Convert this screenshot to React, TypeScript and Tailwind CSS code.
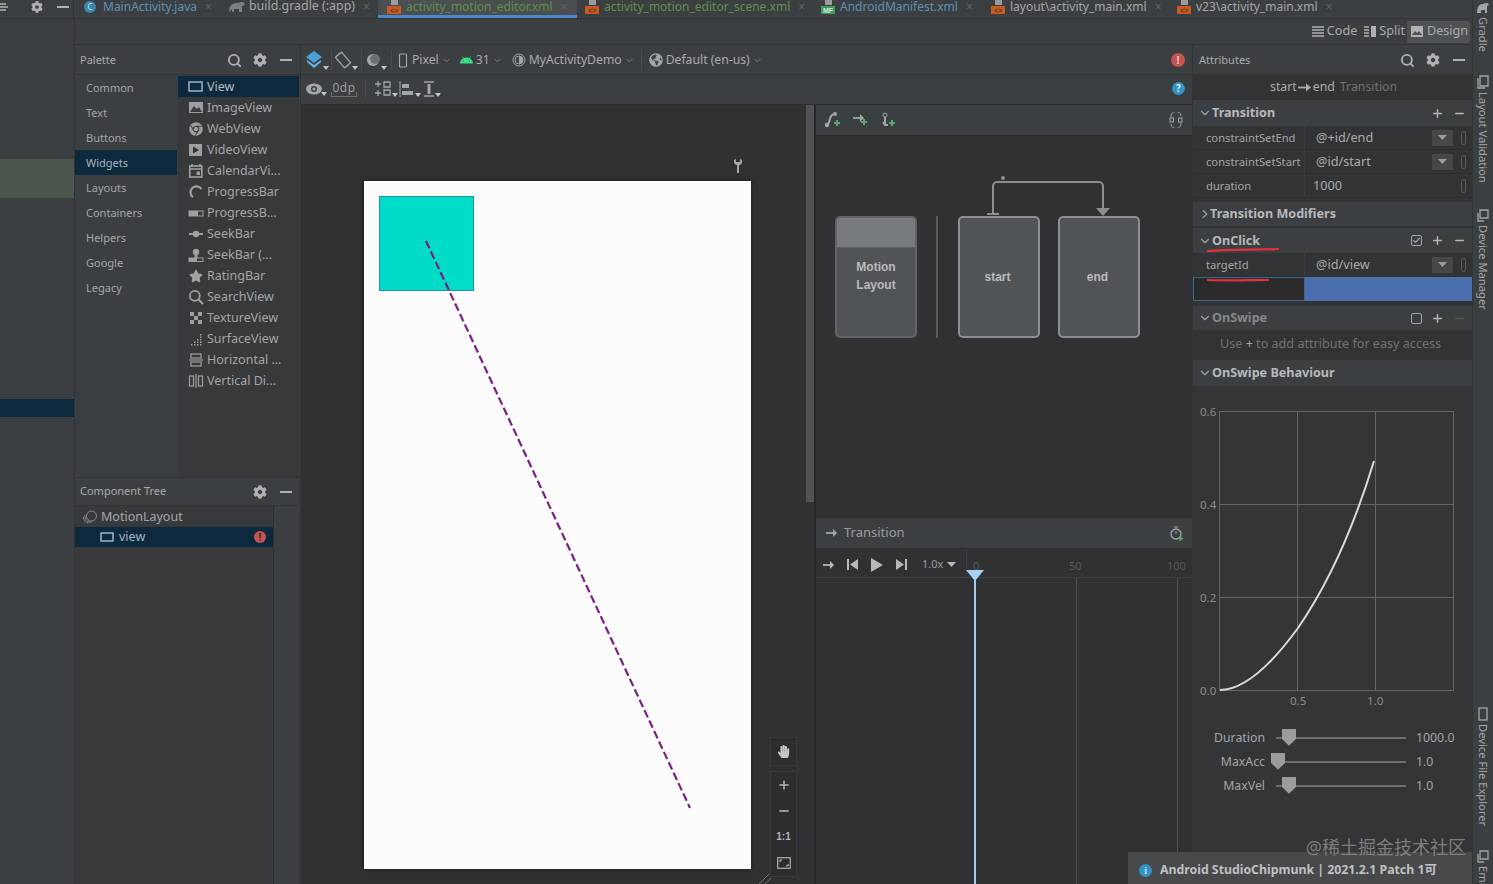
import { Search, Minus, Plus, Check, ChevronDown, ChevronRight } from 'lucide-react';
import { FaCog, FaChrome, FaStar, FaHandPaper, FaAndroid, FaGlobeAmericas } from 'react-icons/fa';

const Gear = () => <FaCog size={14} className="text-[#afb1b3]" />;
const Dash = () => <div className="w-[12px] h-[2px] bg-[#afb1b3]" />;

const FileIcon = ({ kind }: { kind: 'xml' | 'mf' }) => (
  <svg width="16" height="14" viewBox="0 0 16 14" className="mr-[4px] shrink-0">
    <rect x="5" y="0" width="7" height="5" fill="#9a9c9e" />
    <rect x="1" y="6" width="14" height="8" fill={kind === 'xml' ? '#c9591f' : '#3f9a5c'} />
    <text x="8" y="12.5" fontSize="7" textAnchor="middle" fill={kind === 'xml' ? '#3c3f41' : '#d8e8dc'} fontFamily="Liberation Sans" fontWeight="700">
      {kind === 'xml' ? '<>' : 'MF'}
    </text>
  </svg>
);

const Tab = ({ w, label, color, icon, active, pl }: { w: string; label: string; color: string; icon: React.ReactNode; active?: boolean; pl: string }) => (
  <div className={`${w} ${pl} h-[18px] flex items-center shrink-0 whitespace-nowrap text-[12px] ${active ? 'bg-[#4a4e50] border-b-[3px] border-[#4a88c7] pb-[2px]' : 'pb-[5px]'}`}>
    {icon}
    <span className={color}>{label}</span>
    <span className="ml-[8px] text-[#5f6264] text-[12px]">×</span>
  </div>
);

const Caret = ({ className = '' }: { className?: string }) => (
  <svg width="6" height="4" viewBox="0 0 6 4" className={`self-end ${className}`}><path d="M0 0h6L3 4z" fill="#c4c6c8" /></svg>
);

const Chev = ({ className = '' }: { className?: string }) => <ChevronDown size={11} className={`text-[#7f8183] ${className}`} />;

const categories = ['Common', 'Text', 'Buttons', 'Widgets', 'Layouts', 'Containers', 'Helpers', 'Google', 'Legacy'];

const c = '#9da0a2';
const widgets: { name: string; icon: React.ReactNode }[] = [
  { name: 'View', icon: <rect x="1" y="3" width="13" height="9" fill="none" stroke="#9fb4c6" strokeWidth="1.5" /> },
  { name: 'ImageView', icon: <><rect x="1" y="2" width="14" height="11" fill={c} /><path d="M2 12l4-6 3 3 2-2 3 5z" fill="#3a3c3e" /></> },
  { name: 'WebView', icon: null },
  { name: 'VideoView', icon: <><rect x="1" y="2" width="13" height="12" fill={c} /><path d="M5 4.5l6 3.5-6 3.5z" fill="#333537" /></> },
  { name: 'CalendarVi...', icon: <><rect x="1.8" y="3" width="12" height="11" fill="none" stroke={c} strokeWidth="1.6" /><path d="M4 1v3M12 1v3M2 6h12" stroke={c} strokeWidth="1.6" /><rect x="8.5" y="8.5" width="3.5" height="3.5" fill={c} /></> },
  { name: 'ProgressBar', icon: <path d="M13.5 5A6 6 0 1 0 5 13.2" fill="none" stroke={c} strokeWidth="2.2" /> },
  { name: 'ProgressB...', icon: <><rect x="1" y="6" width="14" height="5" fill="none" stroke={c} strokeWidth="1" /><rect x="1" y="6" width="9" height="5" fill={c} /></> },
  { name: 'SeekBar', icon: <><rect x="1" y="7" width="14" height="2" fill={c} /><circle cx="8" cy="8" r="3.2" fill={c} /></> },
  { name: 'SeekBar (...', icon: <><circle cx="8" cy="5" r="3.2" fill={c} /><path d="M6.5 8h3v3h-3z" fill={c} /><rect x="1" y="11" width="14" height="3.5" fill="none" stroke={c} /><rect x="1" y="11" width="8" height="3.5" fill={c} /></> },
  { name: 'RatingBar', icon: null },
  { name: 'SearchView', icon: <><circle cx="6.8" cy="6.8" r="5" fill="none" stroke={c} strokeWidth="1.8" /><path d="M10.5 10.5L15 15" stroke={c} strokeWidth="2" /></> },
  { name: 'TextureView', icon: <path d="M2 2h4v4H2zM10 2h4v4h-4zM6 6h4v4H6zM2 10h4v4H2zM10 10h4v4h-4z" fill={c} /> },
  { name: 'SurfaceView', icon: <path d="M3 13h1.4v1.4H3zM6 13h1.4v1.4H6zM9 13h1.4v1.4H9zM12 13h1.4v1.4H12zM6 10.5h1.4v1.4H6zM9 10.5h1.4v1.4H9zM12 10.5h1.4v1.4H12zM9 8h1.4v1.4H9zM12 8h1.4v1.4H12zM12 5.5h1.4v1.4H12zM12 3h1.4v1.4H12z" fill={c} /> },
  { name: 'Horizontal ...', icon: <><rect x="3" y="2" width="10" height="4" fill="none" stroke={c} strokeWidth="1.2" /><path d="M1 8h14" stroke={c} strokeWidth="1.2" /><rect x="3" y="10" width="10" height="4" fill="none" stroke={c} strokeWidth="1.2" /></> },
  { name: 'Vertical Di...', icon: <><rect x="1.5" y="3" width="4" height="10" fill="none" stroke={c} strokeWidth="1.2" /><path d="M8 1v14" stroke={c} strokeWidth="1.2" /><rect x="10.5" y="3" width="4" height="10" fill="none" stroke={c} strokeWidth="1.2" /></> },
];

const WidgetIcon = ({ w }: { w: (typeof widgets)[number] }) => {
  if (w.name === 'WebView') return <FaChrome size={14} className="text-[#9da0a2] mr-[4px] ml-[1px] shrink-0" />;
  if (w.name === 'RatingBar') return <FaStar size={14} className="text-[#9da0a2] mr-[4px] ml-[1px] shrink-0" />;
  return <svg width="16" height="16" viewBox="0 0 16 16" className="mr-[3px] shrink-0">{w.icon}</svg>;
};

const Section = ({ title, open = true, dim, right, py = 'h-[24px]' }: { title: string; open?: boolean; dim?: boolean; right?: React.ReactNode; py?: string }) => (
  <div className={`${py} bg-[#3c3f41] flex items-center pl-[5px] pr-[6px] shrink-0`}>
    {open ? <ChevronDown size={14} className="text-[#a0a2a4]" /> : <ChevronRight size={14} className="text-[#a0a2a4] mr-[-2px]" />}
    <span className={`text-[12.6px] font-bold pt-[1px] ${dim ? 'text-[#85888a]' : 'text-[#b7b9bb]'}`}>{title}</span>
    <div className="ml-auto flex items-center gap-[9px]">{right}</div>
  </div>
);

const PropRow = ({ label, value, dropdown = true, vx = 'pl-[11px]' }: { label: string; value: string; dropdown?: boolean; vx?: string }) => (
  <div className="h-[24px] flex items-center bg-[#313335] border-b border-[#2b2d2f] text-[#a3a6a8] shrink-0">
    <div className="w-[112px] pl-[13px] pt-[1px] whitespace-nowrap border-r border-[#3c3f41] h-full flex items-center text-[11.2px]">{label}</div>
    <div className={`${vx} pt-[1px] flex-1 text-[12.7px] text-[#a9abad]`}>{value}</div>
    {dropdown && (
      <div className="w-[21px] h-[16px] bg-[#45484a] flex items-center justify-center"><svg width="9" height="5" viewBox="0 0 9 5"><path d="M0 0h9L4.5 5z" fill="#9a9c9e" /></svg></div>
    )}
    <div className="ml-[8px] mr-[6px] w-[5px] h-[14px] rounded-[3px] border border-[#5a5c5e]" />
  </div>
);

const Slider = ({ label, value, thumb }: { label: string; value: string; thumb: string }) => (
  <div className="h-[24px] flex items-center text-[12.3px] text-[#a3a6a8]">
    <div className="w-[72px] text-right">{label}</div>
    <div className="relative ml-[11px] w-[130px] h-[2.5px] bg-[#6b6d6f]">
      <div className={`absolute top-[-8px] ${thumb} w-[14px] h-[17px] bg-[#9a9c9e] [clip-path:polygon(0_0,100%_0,100%_60%,50%_100%,0_60%)]`} />
    </div>
    <div className="ml-[10px]">{value}</div>
  </div>
);

const Side = ({ label, icon, mt }: { label: string; icon: React.ReactNode; mt: string }) => (
  <div className={`${mt} flex flex-col items-center shrink-0`}>
    {icon}
    <span className="[writing-mode:vertical-rl] text-[11.2px] text-[#a3a6a8] mt-[3px] whitespace-nowrap">{label}</span>
  </div>
);

const DeviceIcon = () => (
  <svg width="12" height="13" viewBox="0 0 12 13"><path d="M3 1h8v8H3zM1 4v8h6" fill="none" stroke="#a3a6a8" strokeWidth="1.3" /></svg>
);

export default function App() {
  return (
    <div className="relative w-[1493px] h-[884px] overflow-hidden flex bg-[#3c3f41] text-[#a9abad] font-['Noto_Sans',sans-serif]">
      <div className="w-[1472px] flex flex-col shrink-0">
        {/* tab bar */}
        <div className="h-[19px] flex border-b border-[#323436] shrink-0 overflow-hidden">
          <div className="w-[74px] h-[18px] flex items-center pb-[5px] shrink-0 border-r border-[#323436]">
            <svg width="8" height="10" viewBox="0 0 8 10" className="mr-[23px]"><path d="M0 2h6M0 5h8M0 8h6" stroke="#afb1b3" strokeWidth="1.4" /></svg>
            <FaCog size={12} className="text-[#afb1b3] mr-[14px]" />
            <div className="w-[12px] h-[2px] bg-[#afb1b3]" />
          </div>
          <Tab w="w-[146px]" pl="pl-[10px]" label="MainActivity.java" color="text-[#5d8fb5]" icon={<span className="w-[12px] h-[12px] mr-[7px] rounded-full bg-[#3c86ab] text-[8px] leading-[12px] text-center text-[#cfe3ee]">C</span>} />
          <Tab w="w-[158px]" pl="pl-[8px]" label="build.gradle (:app)" color="text-[#a3a6a8] text-[12.4px]" icon={<svg width="18" height="12" viewBox="0 0 18 12" className="mr-[3px]"><path d="M1 11c0-6 3-9 8-9 2 0 3-1 5-1 2 0 3 2 3 3l-3 1v6h-3V8H6v3H4V8z" fill="#7c7f81" /></svg>} />
          <Tab active w="w-[199px]" pl="pl-[8px]" label="activity_motion_editor.xml" color="text-[#5f8f4a]" icon={<FileIcon kind="xml" />} />
          <Tab w="w-[235px]" pl="pl-[7px]" label="activity_motion_editor_scene.xml" color="text-[#5f8f4a]" icon={<FileIcon kind="xml" />} />
          <Tab w="w-[170px]" pl="pl-[8px]" label="AndroidManifest.xml" color="text-[#5d8fb5]" icon={<FileIcon kind="mf" />} />
          <Tab w="w-[186px]" pl="pl-[8px]" label="layout\activity_main.xml" color="text-[#a3a6a8]" icon={<FileIcon kind="xml" />} />
          <Tab w="w-[176px]" pl="pl-[8px]" label="v23\activity_main.xml" color="text-[#a3a6a8]" icon={<FileIcon kind="xml" />} />
        </div>

        <div className="flex-1 flex min-h-0">
          {/* project panel remains */}
          <div className="w-[75px] shrink-0 flex flex-col border-r border-[#323436] pt-[140px]">
            <div className="h-[39px] bg-[#4a564b]" />
            <div className="h-[201px]" />
            <div className="h-[18px] bg-[#0d293e]" />
          </div>

          <div className="flex-1 flex flex-col min-w-0">
            {/* code split design */}
            <div className="h-[26px] flex items-center justify-end pr-[2px] border-b border-[#323436] text-[12.6px] text-[#a9abad] shrink-0">
              <svg width="12" height="11" viewBox="0 0 12 11" className="mr-[3px]"><path d="M0 1h12M0 4h12M0 7h12M0 10h12" stroke="#afb1b3" strokeWidth="1.4" /></svg>
              <span>Code</span>
              <svg width="12" height="11" viewBox="0 0 12 11" className="ml-[7px] mr-[3px]"><path d="M0 1h5M0 4h5M0 7h5M0 10h5" stroke="#afb1b3" strokeWidth="1.4" /><rect x="7" y="0" width="5" height="11" fill="#afb1b3" /></svg>
              <span>Split</span>
              <div className="ml-[2px] w-[63px] h-[22px] bg-[#4e5254] flex items-center pl-[4px] rounded-[2px]">
                <svg width="12" height="11" viewBox="0 0 12 11" className="mr-[4px]"><rect width="12" height="11" fill="#afb1b3" /><path d="M1 9l3-4 2 2 2-2 3 4z" fill="#4e5254" /></svg>
                <span>Design</span>
              </div>
            </div>

            <div className="flex-1 flex min-h-0">
              {/* palette */}
              <div className="w-[225px] shrink-0 flex flex-col">
                <div className="h-[30px] flex items-center pl-[5px] pr-[8px] pt-[1px] border-b border-[#323436] shrink-0">
                  <span className="text-[11px] text-[#a9abad]">Palette</span>
                  <Search size={15} strokeWidth={3} className="ml-auto text-[#afb1b3]" />
                  <span className="ml-[11px]"><Gear /></span>
                  <span className="ml-[13px]"><Dash /></span>
                </div>
                <div className="h-[403px] flex border-b border-[#323436] shrink-0">
                  <div className="w-[103px] shrink-0">
                    {categories.map((n) => (
                      <div key={n} className={`h-[25px] mr-[1px] flex items-center pl-[11px] pt-[1px] text-[11px] ${n === 'Widgets' ? 'bg-[#0d293e] text-[#a9b4bd]' : 'text-[#a3a6a8]'}`}>{n}</div>
                    ))}
                  </div>
                  <div className="flex-1 bg-[#37393b] pt-[1px] mr-[1px]">
                    {widgets.map((w) => (
                      <div key={w.name} className={`h-[21px] flex items-center pl-[10px] pt-[1px] text-[12.5px] whitespace-nowrap ${w.name === 'View' ? 'bg-[#0d293e] text-[#b4bdc4]' : 'text-[#a3a6a8]'}`}>
                        <WidgetIcon w={w} />
                        {w.name}
                      </div>
                    ))}
                  </div>
                </div>
                <div className="h-[28px] flex items-center pl-[5px] pr-[8px] border-b border-[#323436] shrink-0">
                  <span className="text-[11px] text-[#a9abad]">Component Tree</span>
                  <span className="ml-auto"><Gear /></span>
                  <span className="ml-[13px]"><Dash /></span>
                </div>
                <div className="flex-1 flex">
                  <div className="w-[199px] bg-[#37393b] border-r border-[#2d2f31] pt-[1px]">
                    <div className="h-[20px] flex items-center pl-[7px] text-[12.5px] text-[#a3a6a8]">
                      <svg width="16" height="14" viewBox="0 0 16 14" className="mr-[3px]"><circle cx="9.5" cy="6" r="5" fill="none" stroke="#8a8c8e" /><path d="M3 5a6 6 0 0 0 7 7M1.5 7a6 6 0 0 0 5 6" fill="none" stroke="#8a8c8e" /></svg>
                      MotionLayout
                    </div>
                    <div className="h-[20px] bg-[#0d293e] flex items-center pl-[25px] text-[12.5px] text-[#a9b4bd]">
                      <svg width="14" height="10" viewBox="0 0 14 10" className="mr-[5px]"><rect x="1" y="1" width="12" height="8" fill="none" stroke="#9fb4c6" strokeWidth="1.5" /></svg>
                      view
                      <span className="ml-auto mr-[7px] w-[12px] h-[12px] rounded-full bg-[#c75450] text-[#2d2f31] text-[10px] font-bold leading-[12px] text-center">!</span>
                    </div>
                  </div>
                </div>
              </div>

              {/* design surface */}
              <div className="w-[892px] shrink-0 flex flex-col border-l border-[#323436]">
                <div className="h-[30px] flex items-center border-b border-[#323436] shrink-0 text-[12.2px] text-[#a9abad] pl-[4px] pr-[8px] pt-[1px]">
                  <svg width="20" height="20" viewBox="0 0 20 20"><path d="M9 1l8 6-8 6-8-6z" fill="#4a9fd8" /><path d="M2 10l7 5 7-5v2l-7 6-7-6z" fill="#6ab5e8" /></svg>
                  <Caret className="mb-[4px] ml-[-2px]" />
                  <div className="w-px h-[20px] bg-[#4a4c4e] mx-[2px]" />
                  <svg width="18" height="18" viewBox="0 0 18 18"><rect x="5" y="2" width="8" height="14" transform="rotate(-40 9 9)" fill="none" stroke="#a3a6a8" strokeWidth="1.2" /><path d="M2 6a8 8 0 0 1 4-4M16 12a8 8 0 0 1-4 4" fill="none" stroke="#a3a6a8" /></svg>
                  <Caret className="mb-[4px]" />
                  <div className="w-px h-[20px] bg-[#4a4c4e] mx-[3px]" />
                  <svg width="16" height="16" viewBox="0 0 16 16"><circle cx="8" cy="8" r="6" fill="#a3a6a8" /><circle cx="10" cy="7" r="5" fill="#6c6f71" /></svg>
                  <Caret className="mb-[4px]" />
                  <div className="w-px h-[20px] bg-[#4a4c4e] mx-[4px]" />
                  <svg width="10" height="15" viewBox="0 0 10 15" className="ml-[2px] mr-[4px]"><rect x="1.5" y="1" width="7" height="13" rx="1" fill="none" stroke="#a3a6a8" strokeWidth="1.2" /></svg>
                  <span>Pixel</span>
                  <Chev className="ml-[2px]" />
                  <FaAndroid size={13} className="text-[#3ddc84] ml-[8px] mr-[3px]" />
                  <span>31</span>
                  <Chev className="ml-[2px]" />
                  <svg width="14" height="14" viewBox="0 0 14 14" className="ml-[9px] mr-[3px]"><circle cx="7" cy="7" r="6" fill="none" stroke="#a3a6a8" /><path d="M7 3a4 4 0 0 1 0 8z" fill="#a3a6a8" /><circle cx="7" cy="7" r="4" fill="none" stroke="#a3a6a8" /></svg>
                  <span>MyActivityDemo</span>
                  <Chev className="ml-[2px]" />
                  <div className="w-px h-[20px] bg-[#4a4c4e] ml-[6px] mr-[7px]" />
                  <FaGlobeAmericas size={14} className="text-[#a3a6a8] mr-[3px]" />
                  <span>Default (en-us)</span>
                  <Chev className="ml-[2px]" />
                  <span className="ml-auto mr-[-1px] w-[14px] h-[14px] rounded-full bg-[#c75450] text-[#f0d0d0] text-[11px] font-bold leading-[14px] text-center">!</span>
                </div>
                <div className="h-[30px] flex items-center border-b border-[#2b2d2f] shrink-0 pl-[5px] pr-[8px] pb-[2px]">
                  <svg width="16" height="12" viewBox="0 0 16 12"><ellipse cx="8" cy="6" rx="8" ry="5.5" fill="#a3a6a8" /><circle cx="8" cy="6" r="3" fill="#3c3f41" /><circle cx="8" cy="6" r="1.5" fill="#a3a6a8" /></svg>
                  <Caret className="mb-[6px] ml-[-1px]" />
                  <div className="relative ml-[4px] w-[26px] h-[16px] border-b border-[#6c6f71] text-center text-[12px] leading-[13px] text-[#9a9c9e] tracking-[0.5px]">
                    0dp
                    <div className="absolute left-0 bottom-0 w-px h-[4px] bg-[#6c6f71]" />
                    <div className="absolute right-0 bottom-0 w-px h-[4px] bg-[#6c6f71]" />
                  </div>
                  <div className="w-px h-[18px] bg-[#4a4c4e] mx-[8px]" />
                  <svg width="18" height="17" viewBox="0 0 18 17"><path d="M4 1v6M1 4h6M4 10v6M1 13h6" stroke="#a3a6a8" strokeWidth="1.3" /><path d="M10 2h6v5h-6zM10 10h6v5h-6z" fill="none" stroke="#a3a6a8" strokeWidth="1.3" /></svg>
                  <Caret className="mb-[5px]" />
                  <svg width="16" height="16" viewBox="0 0 16 16" className="ml-[1px]"><path d="M1 0v16" stroke="#a3a6a8" /><rect x="3" y="3" width="7" height="4" fill="#a3a6a8" /><rect x="3" y="10" width="11" height="4" fill="#a3a6a8" /></svg>
                  <Caret className="mb-[5px]" />
                  <svg width="12" height="16" viewBox="0 0 12 16" className="ml-[2px]"><path d="M1 1h10M1 15h10" stroke="#a3a6a8" strokeWidth="1.4" /><rect x="4.5" y="3" width="3" height="10" fill="#a3a6a8" /></svg>
                  <Caret className="mb-[5px]" />
                  <span className="ml-auto mr-[-1px] w-[13px] h-[13px] rounded-full bg-[#3592c4] text-[#d7ebf5] text-[10px] font-bold leading-[13px] text-center">?</span>
                </div>

                <div className="flex-1 flex min-h-0">
                  {/* canvas */}
                  <div className="relative w-[515px] shrink-0 bg-[#2f3133] border-r-2 border-[#252729] pl-[63px] pt-[76px]">
                    <div className="absolute left-[505px] top-0 w-[8px] h-[397px] bg-[#505254]" />
                    <svg width="10" height="14" viewBox="0 0 10 14" className="absolute left-[432px] top-[54px]"><path d="M1 1v3l2 2h1v8h2V6h1l2-2V1L7 0v3H3V0z" fill="#a3a6a8" /></svg>
                    <div className="relative w-[387px] h-[688px] bg-[#fcfcfc] shadow-[0_0_4px_rgba(0,0,0,0.6)] pl-[15px] pt-[15px]">
                      <div className="w-[95px] h-[95px] bg-[#00dcc8] border border-[#1d95ad]" />
                      <svg width="387" height="688" viewBox="0 0 387 688" className="absolute left-0 top-0">
                        <path d="M62 60L326 627" fill="none" stroke="#7b1f86" strokeWidth="2.2" strokeDasharray="8 3.500" />
                      </svg>
                    </div>
                    <div className="absolute left-[469px] top-[632px] w-[27px] h-[29px] bg-[#2b2d2f] border border-[#37393b] flex items-center justify-center">
                      <FaHandPaper size={13} className="text-[#c4c6c8]" />
                    </div>
                    <div className="absolute left-[469px] top-[666px] w-[27px] h-[106px] bg-[#2b2d2f] border border-[#37393b] flex flex-col items-center text-[#b5b7b9]">
                      <div className="h-[26px] flex items-center justify-center shrink-0"><Plus size={14} strokeWidth={2.5} /></div>
                      <div className="h-[26px] flex items-center justify-center shrink-0"><Minus size={14} strokeWidth={2.5} /></div>
                      <div className="h-[26px] flex items-center justify-center shrink-0 text-[10px] font-bold leading-none font-['Liberation_Sans',sans-serif]">1:1</div>
                      <div className="h-[26px] flex items-center justify-center shrink-0"><svg width="14" height="12" viewBox="0 0 14 12"><rect x="0.7" y="0.7" width="12.6" height="10.6" fill="none" stroke="#a3a6a8" strokeWidth="1.3" /><path d="M3 5V3h2M11 7v2H9" fill="none" stroke="#c4c6c8" /></svg></div>
                    </div>
                    <svg width="14" height="10" viewBox="0 0 14 10" className="absolute left-[458px] top-[769px]"><path d="M0 10L10 0M6 10L12 4" stroke="#6c6f71" /></svg>
                  </div>

                  {/* motion side */}
                  <div className="flex-1 flex flex-col min-w-0">
                    <div className="h-[31px] flex items-center pl-[8px] pr-[8px] border-b border-[#2b2d2f] shrink-0">
                      <svg width="18" height="16" viewBox="0 0 18 16"><path d="M2 13c5 0 2-10 8-11" fill="none" stroke="#a3a6a8" strokeWidth="2" /><circle cx="3" cy="13" r="2.200" fill="#a3a6a8" /><circle cx="11" cy="2" r="2" fill="#a3a6a8" /><path d="M13 8v6M10 11h6" stroke="#59a869" strokeWidth="2" /></svg>
                      <svg width="16" height="14" viewBox="0 0 16 14" className="ml-[11px]"><path d="M0 5h9" stroke="#a3a6a8" strokeWidth="1.800" /><path d="M7 1l4 4-4 4z" fill="#a3a6a8" /><path d="M11 6v6M8 9h6" stroke="#59a869" strokeWidth="2" /></svg>
                      <svg width="16" height="16" viewBox="0 0 16 16" className="ml-[11px]"><circle cx="5" cy="3" r="2" fill="none" stroke="#a3a6a8" /><path d="M5 5v7M3 10l2 3h3" fill="none" stroke="#a3a6a8" strokeWidth="2" /><path d="M12 8v6M9 11h6" stroke="#59a869" strokeWidth="2" /></svg>
                      <svg width="14" height="16" viewBox="0 0 14 16" className="ml-auto mr-[1px]"><rect x="1" y="6" width="3.500" height="4" fill="none" stroke="#a3a6a8" /><rect x="9.500" y="6" width="3.500" height="4" fill="none" stroke="#a3a6a8" /><path d="M2 5a5 5 0 0 1 10-1M12 11a5 5 0 0 1-10 1" fill="none" stroke="#a3a6a8" /></svg>
                    </div>
                    <div className="relative h-[381px] bg-[#2f3133] shrink-0 flex pl-[19px] pt-[80px]">
                      <div className="w-[82px] h-[122px] rounded-[5px] border-2 border-[#616466] bg-[#515456] flex flex-col overflow-hidden">
                        <div className="h-[30px] bg-[#787b7d] border-b border-[#5e6163] shrink-0" />
                        <div className="text-[12px] font-bold text-[#b9bbbd] leading-[18px] text-center font-['Liberation_Sans',sans-serif] pt-[10px]">Motion<br />Layout</div>
                      </div>
                      <div className="w-[2px] h-[122px] bg-[#5a5d5f] ml-[19px] mr-[20px]" />
                      <div className="w-[82px] h-[122px] rounded-[5px] border-2 border-[#8c8f91] bg-[#515456] flex items-center justify-center pr-[3px] text-[12px] font-bold text-[#b9bbbd] font-['Liberation_Sans',sans-serif]">start</div>
                      <div className="ml-[18px] w-[82px] h-[122px] rounded-[5px] border-2 border-[#8c8f91] bg-[#515456] flex items-center justify-center pr-[3px] text-[12px] font-bold text-[#b9bbbd] font-['Liberation_Sans',sans-serif]">end</div>
                      <svg width="376" height="90" viewBox="0 0 376 90" className="absolute left-0 top-0">
                        <path d="M177 78V50a4 4 0 0 1 4-4h102a4 4 0 0 1 4 4v22" fill="none" stroke="#8c8f91" strokeWidth="2" />
                        <path d="M171 78h12" stroke="#8c8f91" strokeWidth="2" />
                        <path d="M280 72h14l-7 8z" fill="#8c8f91" />
                        <circle cx="187" cy="42" r="2" fill="#8c8f91" />
                      </svg>
                    </div>
                    <div className="h-[32px] flex items-center pl-[10px] pr-[8px] border-y border-[#2b2d2f] shrink-0 text-[13px] text-[#9a9c9e]">
                      <svg width="12" height="10" viewBox="0 0 12 10" className="mr-[6px]"><path d="M0 5h9" stroke="#a3a6a8" strokeWidth="1.800" /><path d="M7 1l4 4-4 4z" fill="#a3a6a8" /></svg>
                      Transition
                      <svg width="15" height="15" viewBox="0 0 15 15" className="ml-auto"><path d="M5 1h4" stroke="#a3a6a8" /><circle cx="7" cy="8" r="5" fill="none" stroke="#a3a6a8" strokeWidth="1.3" /><path d="M7 5v3" stroke="#a3a6a8" /><path d="M11.500 10v5M9 12.500h5" stroke="#59a869" strokeWidth="1.600" /></svg>
                    </div>
                    <div className="relative flex-1 bg-[#2f3133]">
                      <div className="h-[29px] flex items-center border-b border-[#3c3f41] pl-[6px] pt-[3px] text-[#b5b7b9]">
                        <svg width="14" height="10" viewBox="0 0 14 10"><path d="M1 5h9" stroke="#b5b7b9" strokeWidth="1.800" /><path d="M8 1l4 4-4 4z" fill="#b5b7b9" /></svg>
                        <svg width="12" height="11" viewBox="0 0 12 11" className="ml-[11px]"><rect x="0" y="0" width="2" height="11" fill="#b5b7b9" /><path d="M11 0v11L3 5.500z" fill="#b5b7b9" /></svg>
                        <svg width="12" height="14" viewBox="0 0 12 14" className="ml-[12px]"><path d="M0 0v14l12-7z" fill="#b5b7b9" /></svg>
                        <svg width="12" height="11" viewBox="0 0 12 11" className="ml-[12px]"><rect x="10" y="0" width="2" height="11" fill="#b5b7b9" /><path d="M1 0v11l8-5.500z" fill="#b5b7b9" /></svg>
                        <span className="ml-[15px] text-[11px] text-[#9a9c9e]">1.0x</span>
                        <svg width="9" height="5" viewBox="0 0 9 5" className="ml-[4px]"><path d="M0 0h9L4.500 5z" fill="#b5b7b9" /></svg>
                      </div>
                      <div className="absolute left-[150px] top-0 w-px h-[29px] bg-[#3c3f41]" />
                      <span className="absolute left-[157px] top-[9px] text-[11px] text-[#55585a]">0</span>
                      <span className="absolute left-[253px] top-[9px] text-[11px] text-[#55585a]">50</span>
                      <span className="absolute left-[351px] top-[9px] text-[11px] text-[#55585a]">100</span>
                      <div className="absolute left-[260px] top-[29px] bottom-0 w-px bg-[#4c4e50]" />
                      <div className="absolute left-[361px] top-[29px] bottom-0 w-px bg-[#4c4e50]" />
                      <svg width="18" height="11" viewBox="0 0 18 11" className="absolute left-[150px] top-[21px]"><path d="M0 0h18L9 11z" fill="#a6d2f8" /></svg>
                      <div className="absolute left-[158px] top-[30px] bottom-0 w-[2px] bg-[#a6cdee]" />
                    </div>
                  </div>
                </div>
              </div>

              {/* attributes */}
              <div className="relative flex-1 flex flex-col min-w-0 border-l border-[#323436] overflow-hidden">
                <div className="h-[30px] flex items-center pl-[6px] pr-[7px] pt-[1px] border-b border-[#323436] shrink-0">
                  <span className="text-[11px] text-[#a9abad]">Attributes</span>
                  <Search size={15} strokeWidth={3} className="ml-auto text-[#afb1b3]" />
                  <span className="ml-[11px]"><Gear /></span>
                  <span className="ml-[13px]"><Dash /></span>
                </div>
                <div className="h-[25px] bg-[#313335] flex items-center pl-[77px] text-[12.3px] shrink-0">
                  <span className="text-[#a9abad]">start</span>
                  <svg width="14" height="9" viewBox="0 0 14 9" className="mx-[1px]"><path d="M0 4.500h9" fill="none" stroke="#a9abad" strokeWidth="1.800" /><path d="M8 0.500l5 4-5 4z" fill="#a9abad" /></svg>
                  <span className="text-[#a9abad]">end</span>
                  <span className="ml-[5px] text-[#6f7274]">Transition</span>
                </div>
                <Section title="Transition" py="h-[26px]" right={<><Plus size={13} strokeWidth={2.5} className="text-[#b5b7b9]" /><Minus size={13} strokeWidth={2.5} className="text-[#b5b7b9]" /></>} />
                <PropRow label="constraintSetEnd" value="@+id/end" />
                <PropRow label="constraintSetStart" value="@id/start" />
                <PropRow label="duration" value="1000" dropdown={false} vx="pl-[8px]" />
                <div className="h-[4px] bg-[#313335] shrink-0" />
                <Section title="Transition Modifiers" open={false} />
                <div className="h-[2px] bg-[#313335] shrink-0" />
                <Section title="OnClick" py="h-[25px]" right={<><span className="w-[11px] h-[11px] rounded-[2px] border border-[#a3a6a8] flex items-center justify-center"><Check size={9} strokeWidth={3} className="text-[#a3a6a8]" /></span><Plus size={13} strokeWidth={2.5} className="text-[#b5b7b9]" /><Minus size={13} strokeWidth={2.5} className="text-[#b5b7b9]" /></>} />
                <PropRow label="targetId" value="@id/view" />
                <div className="h-[24px] flex shrink-0">
                  <div className="w-[112px] bg-[#2b2b2b] border border-[#3b6a8c]" />
                  <div className="flex-1 bg-[#4b6eaf]" />
                </div>
                <div className="h-[5px] bg-[#313335] shrink-0" />
                <Section dim title="OnSwipe" right={<><span className="w-[11px] h-[11px] rounded-[2px] border border-[#a3a6a8]" /><Plus size={13} strokeWidth={2.5} className="text-[#b5b7b9]" /><Minus size={13} strokeWidth={2.5} className="text-[#55585a]" /></>} />
                <div className="h-[28px] bg-[#313335] flex items-center pl-[27px] text-[12.6px] text-[#6f7274] shrink-0">
                  <span>Use <span className="text-[#a3a6a8]">+</span> to add attribute for easy access</span>
                </div>
                <div className="h-[2px] bg-[#313335] shrink-0" />
                <Section title="OnSwipe Behaviour" py="h-[26px]" />

                <div className="flex-1 bg-[#333537] flex flex-col">
                  <svg width="280" height="334" viewBox="1192 386 280 334" className="block">
                    <rect x="1218.500" y="411.500" width="234" height="279" fill="none" stroke="#636567" />
                    <path d="M1296.500 411v280M1374.500 411v280M1219 504.500h233M1219 597.500h233" stroke="#636567" />
                    <path d="M1219 690C1240 690 1265 672 1297 628C1330 580 1355 520 1373 461" fill="none" stroke="#d8dadc" strokeWidth="2" />
                    <g fill="#8b8e90" fontSize="11.500" fontFamily="Noto Sans">
                      <text x="1199" y="416">0.6</text>
                      <text x="1199" y="509">0.4</text>
                      <text x="1199" y="602">0.2</text>
                      <text x="1199" y="695">0.0</text>
                      <text x="1289" y="705">0.5</text>
                      <text x="1366" y="705">1.0</text>
                    </g>
                  </svg>
                  <div className="h-[6px]" />
                  <Slider label="Duration" value="1000.0" thumb="left-[6px]" />
                  <Slider label="MaxAcc" value="1.0" thumb="left-[-5px]" />
                  <Slider label="MaxVel" value="1.0" thumb="left-[6px]" />
                </div>

                {/* red marks drawn on the screenshot */}
                <svg width="120" height="50" viewBox="0 0 120 50" className="absolute left-[8px] top-[198px]">
                  <path d="M7 8c20-2 50-1 70-2" fill="none" stroke="#e8303a" strokeWidth="2.200" strokeLinecap="round" />
                  <path d="M7 37c20 1 40 0 60 0" fill="none" stroke="#e8303a" strokeWidth="2.200" strokeLinecap="round" />
                </svg>
              </div>
            </div>
          </div>
        </div>
      </div>

      {/* right tool strip */}
      <div className="relative w-[21px] shrink-0 border-l border-[#323436] flex flex-col items-center overflow-hidden">
        <Side mt="mt-[0px]" label="Gradle" icon={<svg width="14" height="14" viewBox="0 0 14 14"><path d="M1 13c0-6 2-9 6-9 1 0 2-1 4-1 1 0 2 1 2 2l-2 1v7H9v-3H5v3z" fill="#a3a6a8" /></svg>} />
        <Side mt="mt-[23px]" label="Layout Validation" icon={<svg width="12" height="14" viewBox="0 0 12 14"><path d="M3 1h8v10H3zM1 3v10h7" fill="none" stroke="#a3a6a8" strokeWidth="1.300" /></svg>} />
        <Side mt="mt-[26px]" label="Device Manager" icon={<DeviceIcon />} />
        <Side mt="mt-[397px]" label="Device File Explorer" icon={<svg width="10" height="14" viewBox="0 0 10 14"><rect x="1" y="1" width="8" height="12" fill="none" stroke="#a3a6a8" strokeWidth="1.300" /></svg>} />
        <Side mt="mt-[24px]" label="Emulator" icon={<DeviceIcon />} />
      </div>

      {/* build notification */}
      <div className="absolute left-[1128px] top-[852px] w-[344px] h-[32px] bg-[#47494b] flex items-center pl-[11px] pt-[5px] text-[12.3px] font-bold text-[#bfc1c3] whitespace-nowrap font-['Noto_Sans','Noto_Sans_CJK_SC',sans-serif]">
        <span className="w-[13px] h-[13px] mr-[8px] rounded-full bg-[#3592c4] text-[#d7ebf5] text-[9px] leading-[13px] text-center">i</span>
        Android StudioChipmunk | 2021.2.1 Patch 1可
      </div>
      <div className="absolute right-[27px] top-[838px] text-[18px] leading-none text-[#8f9193]/80 whitespace-nowrap font-['Noto_Sans','Noto_Sans_CJK_SC',sans-serif]">@稀土掘金技术社区</div>
    </div>
  );
}
